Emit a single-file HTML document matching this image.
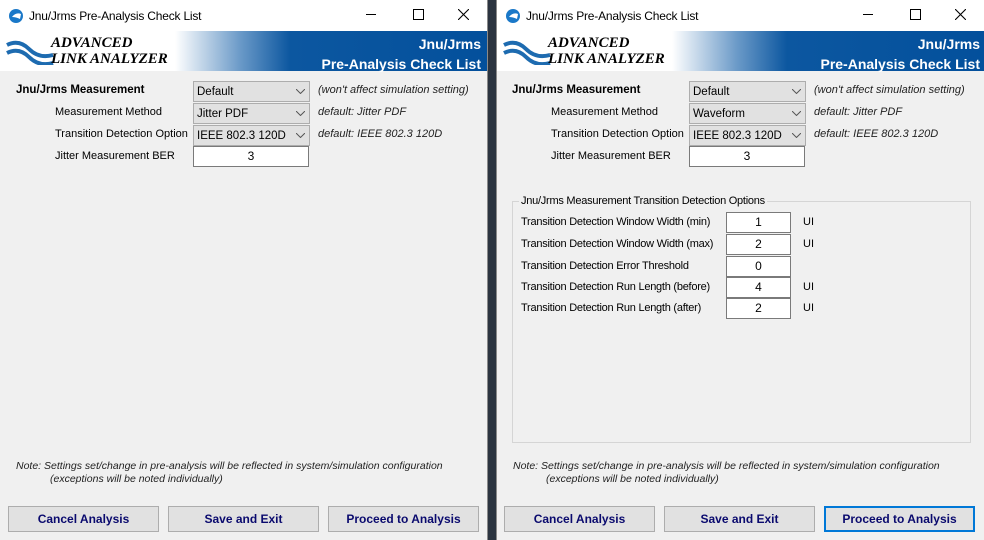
<!DOCTYPE html>
<html><head><style>
body{margin:0;width:984px;height:540px;background:#2b3440;position:relative;overflow:hidden;font-family:"Liberation Sans",sans-serif;font-size:11px;color:#000}
.win{position:absolute;top:0;height:540px;background:#f0f0f0;overflow:hidden}
.a{position:absolute;white-space:nowrap}
.title{position:absolute;left:0;top:0;right:0;height:31px;background:#fff}
.banner{position:absolute;left:0;right:0;top:31px;height:40px;background:linear-gradient(90deg,#fff 0px,#fff 175px,#6b9ac8 240px,#0c57a0 290px,#03509c 100%)}
.combo{position:absolute;width:112px;height:19px;border:1px solid #adadad;background:#e1e1e1;font-size:11.5px;line-height:20px;padding-left:3px;box-sizing:content-box}
.combo svg{position:absolute;right:4px;top:7px}
.tb{position:absolute;background:#fff;border:1px solid #7a7a7a;text-align:center;line-height:19px;font-size:12px}
.btn{position:absolute;top:506px;width:149px;height:24px;border:1px solid #adadad;background:#e1e1e1;text-align:center;line-height:24px;font-weight:bold;font-size:12px;color:#0a0a6e}
.it{font-style:italic;color:#222}
.g{font-size:11px;letter-spacing:-0.25px}
.n{font-size:10.5px;font-style:italic;color:#222}
</style></head><body>

<!-- LEFT WINDOW -->
<div class="win" style="left:0;width:487px;border-right:1px solid #8a8a8a">
 <div class="title">
  <svg class="a" style="left:8px;top:8px" width="16" height="16"><circle cx="8" cy="8" r="7" fill="#1a78c8"/><path d="M4 9 Q8 4 13 6 L12 11 Q8 9 4 9Z" fill="#fff"/></svg>
  <div class="a" style="left:29px;top:9px;font-size:12px;letter-spacing:-0.2px">Jnu/Jrms Pre-Analysis Check List</div>
  <div class="a" style="left:366px;top:14px;width:10px;height:1px;background:#000"></div>
  <div class="a" style="left:413px;top:9px;width:9px;height:9px;border:1px solid #000"></div>
  <svg class="a" style="left:458px;top:9px" width="11" height="11"><path d="M0 0L11 11M11 0L0 11" stroke="#000" stroke-width="1.1"/></svg>
 </div>
 <div class="banner">
  <svg class="a" style="left:5px;top:8px" width="50" height="26"><path d="M2 6 Q14 0 24 10 Q34 20 48 16" stroke="#1d6bb0" stroke-width="4" fill="none"/><path d="M2 14 Q14 8 24 18 Q34 28 48 24" stroke="#1d6bb0" stroke-width="4" fill="none"/></svg>
  <div class="a" style="left:51px;top:4px;font-family:'Liberation Serif',serif;font-style:italic;font-weight:bold;font-size:15px;line-height:16px">ADVANCED<br>LINK ANALYZER</div>
  <div class="a" style="right:6px;top:3px;color:#fff;font-weight:bold;font-size:14px;text-align:right;line-height:20px">Jnu/Jrms<br>Pre-Analysis Check List</div>
 </div>
 <div class="a" style="left:16px;top:84px;font-weight:bold;font-size:11.5px">Jnu/Jrms Measurement</div>
 <div class="a" style="left:55px;top:106px">Measurement Method</div>
 <div class="a" style="left:55px;top:128px">Transition Detection Option</div>
 <div class="a" style="left:55px;top:150px">Jitter Measurement BER</div>
 <div class="combo" style="left:193px;top:81px">Default<svg width="9" height="5"><path d="M0 0L4.5 4.5L9 0" stroke="#555" fill="none"/></svg></div>
 <div class="combo" style="left:193px;top:103px">Jitter PDF<svg width="9" height="5"><path d="M0 0L4.5 4.5L9 0" stroke="#555" fill="none"/></svg></div>
 <div class="combo" style="left:193px;top:125px">IEEE 802.3 120D<svg width="9" height="5"><path d="M0 0L4.5 4.5L9 0" stroke="#555" fill="none"/></svg></div>
 <div class="tb" style="left:193px;top:146px;width:114px;height:19px">3</div>
 <div class="a it" style="left:318px;top:84px;font-size:11px">(won't affect simulation setting)</div>
 <div class="a it" style="left:318px;top:106px;font-size:11px">default: Jitter PDF</div>
 <div class="a it" style="left:318px;top:128px;font-size:11px">default: IEEE 802.3 120D</div>
 <div class="a n" style="left:16px;top:460px">Note: Settings set/change in pre-analysis will be reflected in system/simulation configuration</div>
 <div class="a n" style="left:50px;top:473px">(exceptions will be noted individually)</div>
 <div class="btn" style="left:8px">Cancel Analysis</div>
 <div class="btn" style="left:168px">Save and Exit</div>
 <div class="btn" style="left:328px">Proceed to Analysis</div>
</div>

<!-- RIGHT WINDOW -->
<div class="win" style="left:496px;width:487px;border-left:1px solid #8a8a8a">
 <div class="title">
  <svg class="a" style="left:8px;top:8px" width="16" height="16"><circle cx="8" cy="8" r="7" fill="#1a78c8"/><path d="M4 9 Q8 4 13 6 L12 11 Q8 9 4 9Z" fill="#fff"/></svg>
  <div class="a" style="left:29px;top:9px;font-size:12px;letter-spacing:-0.2px">Jnu/Jrms Pre-Analysis Check List</div>
  <div class="a" style="left:366px;top:14px;width:10px;height:1px;background:#000"></div>
  <div class="a" style="left:413px;top:9px;width:9px;height:9px;border:1px solid #000"></div>
  <svg class="a" style="left:458px;top:9px" width="11" height="11"><path d="M0 0L11 11M11 0L0 11" stroke="#000" stroke-width="1.1"/></svg>
 </div>
 <div class="banner">
  <svg class="a" style="left:5px;top:8px" width="50" height="26"><path d="M2 6 Q14 0 24 10 Q34 20 48 16" stroke="#1d6bb0" stroke-width="4" fill="none"/><path d="M2 14 Q14 8 24 18 Q34 28 48 24" stroke="#1d6bb0" stroke-width="4" fill="none"/></svg>
  <div class="a" style="left:51px;top:4px;font-family:'Liberation Serif',serif;font-style:italic;font-weight:bold;font-size:15px;line-height:16px">ADVANCED<br>LINK ANALYZER</div>
  <div class="a" style="right:4px;top:3px;color:#fff;font-weight:bold;font-size:14px;text-align:right;line-height:20px">Jnu/Jrms<br>Pre-Analysis Check List</div>
 </div>
 <div class="a" style="left:15px;top:84px;font-weight:bold;font-size:11.5px">Jnu/Jrms Measurement</div>
 <div class="a" style="left:54px;top:106px">Measurement Method</div>
 <div class="a" style="left:54px;top:128px">Transition Detection Option</div>
 <div class="a" style="left:54px;top:150px">Jitter Measurement BER</div>
 <div class="combo" style="left:192px;top:81px">Default<svg width="9" height="5"><path d="M0 0L4.5 4.5L9 0" stroke="#555" fill="none"/></svg></div>
 <div class="combo" style="left:192px;top:103px">Waveform<svg width="9" height="5"><path d="M0 0L4.5 4.5L9 0" stroke="#555" fill="none"/></svg></div>
 <div class="combo" style="left:192px;top:125px">IEEE 802.3 120D<svg width="9" height="5"><path d="M0 0L4.5 4.5L9 0" stroke="#555" fill="none"/></svg></div>
 <div class="tb" style="left:192px;top:146px;width:114px;height:19px">3</div>
 <div class="a it" style="left:317px;top:84px;font-size:11px">(won't affect simulation setting)</div>
 <div class="a it" style="left:317px;top:106px;font-size:11px">default: Jitter PDF</div>
 <div class="a it" style="left:317px;top:128px;font-size:11px">default: IEEE 802.3 120D</div>

 <div class="a" style="left:15px;top:201px;width:457px;height:240px;border:1px solid #d5d5d5"></div>
 <div class="a g" style="left:22px;top:195px;background:#f0f0f0;padding:0 2px">Jnu/Jrms Measurement Transition Detection Options</div>
 <div class="a g" style="left:24px;top:216px">Transition Detection Window Width (min)</div>
 <div class="a g" style="left:24px;top:238px">Transition Detection Window Width (max)</div>
 <div class="a g" style="left:24px;top:260px">Transition Detection Error Threshold</div>
 <div class="a g" style="left:24px;top:281px">Transition Detection Run Length (before)</div>
 <div class="a g" style="left:24px;top:302px">Transition Detection Run Length (after)</div>
 <div class="tb" style="left:229px;top:212px;width:63px;height:19px">1</div>
 <div class="tb" style="left:229px;top:234px;width:63px;height:19px">2</div>
 <div class="tb" style="left:229px;top:256px;width:63px;height:19px">0</div>
 <div class="tb" style="left:229px;top:277px;width:63px;height:19px">4</div>
 <div class="tb" style="left:229px;top:298px;width:63px;height:19px">2</div>
 <div class="a" style="left:306px;top:216px">UI</div>
 <div class="a" style="left:306px;top:238px">UI</div>
 <div class="a" style="left:306px;top:281px">UI</div>
 <div class="a" style="left:306px;top:302px">UI</div>

 <div class="a n" style="left:16px;top:460px">Note: Settings set/change in pre-analysis will be reflected in system/simulation configuration</div>
 <div class="a n" style="left:49px;top:473px">(exceptions will be noted individually)</div>
 <div class="btn" style="left:7px">Cancel Analysis</div>
 <div class="btn" style="left:167px">Save and Exit</div>
 <div class="btn" style="left:327px;border:2px solid #0078d7;width:147px;height:22px;line-height:22px">Proceed to Analysis</div>
</div>
</body></html>
